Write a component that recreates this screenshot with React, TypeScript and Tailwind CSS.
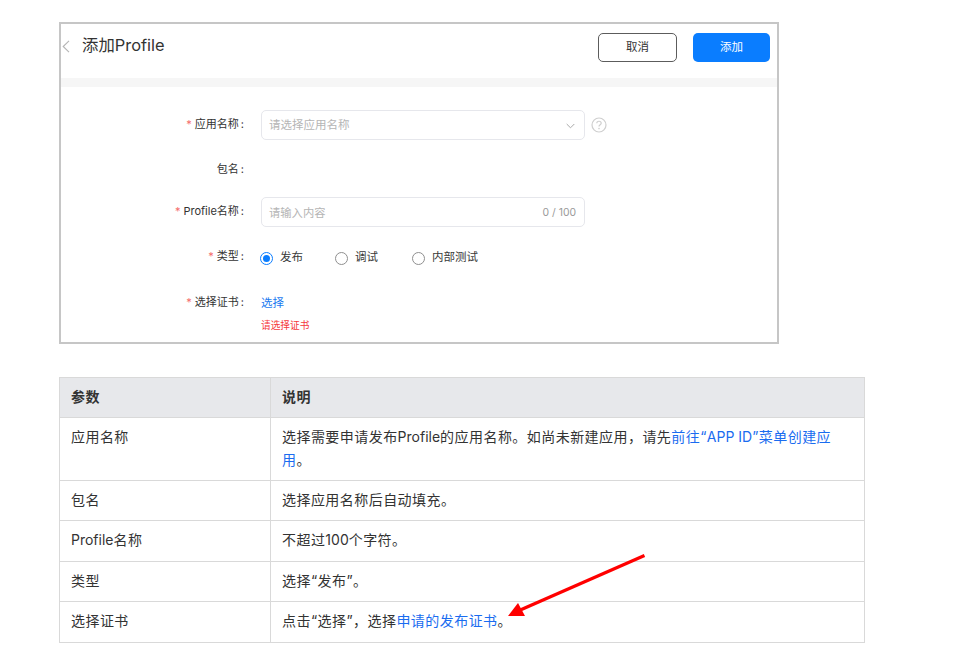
import React from "react";

function Radio({ checked, label, className }: { checked?: boolean; label: string; className?: string }) {
  return (
    <div className={`flex items-center ${className ?? ""}`}>
      <span className={`flex h-[13px] w-[13px] items-center justify-center rounded-full border ${checked ? "border-[#0a7dff]" : "border-[#8f8f8f]"}`}>
        {checked && <span className="h-[7px] w-[7px] rounded-full bg-[#0a7dff]" />}
      </span>
      <span className="ml-[7px] text-[11.5px] text-[#3a3a3a]">{label}</span>
    </div>
  );
}

function Label({ children, required }: { children: React.ReactNode; required?: boolean }) {
  return (
    <div className="w-[183px] shrink-0 pb-[2px] text-right text-[11px] leading-none text-[#333]">
      {required && <span className="mr-[3px] text-[#f56c6c]">*</span>}
      {children}
      <span className="ml-[2px]">:</span>
    </div>
  );
}

function L({ children }: { children: React.ReactNode }) {
  return <span className="tracking-normal">{children}</span>;
}

const rows: { a: React.ReactNode; b: React.ReactNode; h: string }[] = [
  {
    a: "应用名称",
    h: "h-[63px]",
    b: (
      <>
        选择需要申请发布<L>Profile</L>的应用名称。如尚未新建应用，请先
        <span className="text-[#1a6cf0]">
          前往“<L>APP ID</L>”菜单创建应用
        </span>
        。
      </>
    ),
  },
  { a: "包名", h: "h-[40px]", b: "选择应用名称后自动填充。" },
  {
    a: (
      <>
        <L>Profile</L>名称
      </>
    ),
    h: "h-[41px]",
    b: (
      <>
        不超过<L>100</L>个字符。
      </>
    ),
  },
  { a: "类型", h: "h-[40px]", b: "选择“发布”。" },
  {
    a: "选择证书",
    h: "h-[41px]",
    b: (
      <>
        点击“选择”，选择<span className="text-[#1a6cf0]">申请的发布证书</span>。
      </>
    ),
  },
];

export default function App() {
  return (
    <div className="relative h-[651px] w-[967px] overflow-hidden bg-white pt-[22px] pl-[59px] font-['Inter','Noto_Sans_CJK_SC',sans-serif]">
      {/* Screenshot frame */}
      <div className="h-[322px] w-[720px] border-2 border-[#c6c6c6] bg-white">
        <div className="flex h-[54px] items-start">
          <svg className="mt-[16px] ml-[1px]" width="8" height="13" viewBox="0 0 8 13" fill="none" stroke="#b4b4b4" strokeWidth="1.1">
            <path d="M7 0.8 L1.2 6.5 L7 12.2" />
          </svg>
          <div className="mt-[11px] ml-[12px] text-[16.4px] leading-5 text-[#333]">添加Profile</div>
          <div className="mt-[9px] mr-[7px] ml-auto flex gap-[16px]">
            <div className="flex h-[29px] w-[79px] items-center justify-center rounded-[5px] border border-[#5c5c5c] text-[11.5px] text-[#333]">取消</div>
            <div className="flex h-[29px] w-[77px] items-center justify-center rounded-[5px] bg-[#0a7dff] text-[11.5px] text-white">添加</div>
          </div>
        </div>
        <div className="h-[9px] bg-[#f6f6f6]" />
        <div className="pt-[23px]">
          <div className="flex h-[30px] items-center">
            <Label required>应用名称</Label>
            <div className="ml-[17px] flex h-[30px] w-[324px] items-center justify-between rounded-[5px] border border-[#e6e7ec] pt-[2px] pr-[9px] pl-[7px] text-[11.5px] text-[#b5b5b5]">
              <span>请选择应用名称</span>
              <svg width="9" height="6" viewBox="0 0 9 6" fill="none" stroke="#a9a9a9" strokeWidth="1">
                <path d="M0.7 1 L4.5 4.8 L8.3 1" />
              </svg>
            </div>
            <svg className="ml-[6px]" width="16" height="16" viewBox="0 0 16 16" fill="none">
              <circle cx="8" cy="8" r="7" stroke="#cfcfcf" strokeWidth="1.2" />
              <path d="M5.8 6.2 C5.8 3.6 10.2 3.6 10.2 6.2 C10.2 7.8 8 7.8 8 9.6" stroke="#cfcfcf" strokeWidth="1.2" />
              <circle cx="8" cy="11.6" r="0.8" fill="#cfcfcf" />
            </svg>
          </div>
          <div className="mt-[15px] flex h-[30px] items-center">
            <Label>包名</Label>
          </div>
          <div className="mt-[12px] flex h-[30px] items-center">
            <Label required>Profile名称</Label>
            <div className="ml-[17px] flex h-[30px] w-[324px] items-center justify-between rounded-[5px] border border-[#e6e7ec] pt-[2px] pr-[8px] pl-[7px] text-[11.3px] text-[#b5b5b5]">
              <span>请输入内容</span>
              <span className="text-[10.4px] text-[#9a9a9a]">0 / 100</span>
            </div>
          </div>
          <div className="mt-[15px] flex h-[30px] items-center">
            <Label required>类型</Label>
            <div className="ml-[16px] flex translate-y-[1px] items-center">
              <Radio checked label="发布" className="w-[75px]" />
              <Radio label="调试" className="w-[77px]" />
              <Radio label="内部测试" />
            </div>
          </div>
          <div className="mt-[23px] flex h-[16px] items-center">
            <Label required>选择证书</Label>
            <div className="ml-[17px] pt-[2px] text-[11.5px] text-[#1a7af0]">选择</div>
          </div>
          <div className="mt-[8px] ml-[200px] text-[9.7px] leading-[14px] text-[#f5383b]">请选择证书</div>
        </div>
      </div>

      {/* Parameter table */}
      <table className="mt-[33px] w-[806px] table-fixed border-collapse text-sm tracking-[0.45px] text-[#333]">
        <colgroup>
          <col className="w-[211px]" />
          <col />
        </colgroup>
        <thead>
          <tr className="h-[40px] bg-[#e7e8eb]">
            <th className="border border-[#d9d9d9] px-[11px] pb-[1px] text-left font-semibold">参数</th>
            <th className="border border-[#d9d9d9] px-[11px] pb-[1px] text-left font-semibold">说明</th>
          </tr>
        </thead>
        <tbody>
          {rows.map((r, i) => (
            <tr key={i} className={r.h}>
              <td className="border border-[#d9d9d9] px-[11px] pt-[7px] pb-[8px] align-top leading-[23px]">{r.a}</td>
              <td className="border border-[#d9d9d9] pt-[7px] pr-[24px] pb-[8px] pl-[11px] align-top leading-[23px]">{r.b}</td>
            </tr>
          ))}
        </tbody>
      </table>

      {/* Annotation arrow */}
      <svg className="absolute top-0 left-0" width="967" height="651" viewBox="0 0 967 651" fill="none">
        <path d="M644.5 555.5 L518 611" stroke="#ff0000" strokeWidth="3.3" />
        <path d="M508 616 L518 603 L525 616 Z" fill="#ff0000" />
      </svg>
    </div>
  );
}
